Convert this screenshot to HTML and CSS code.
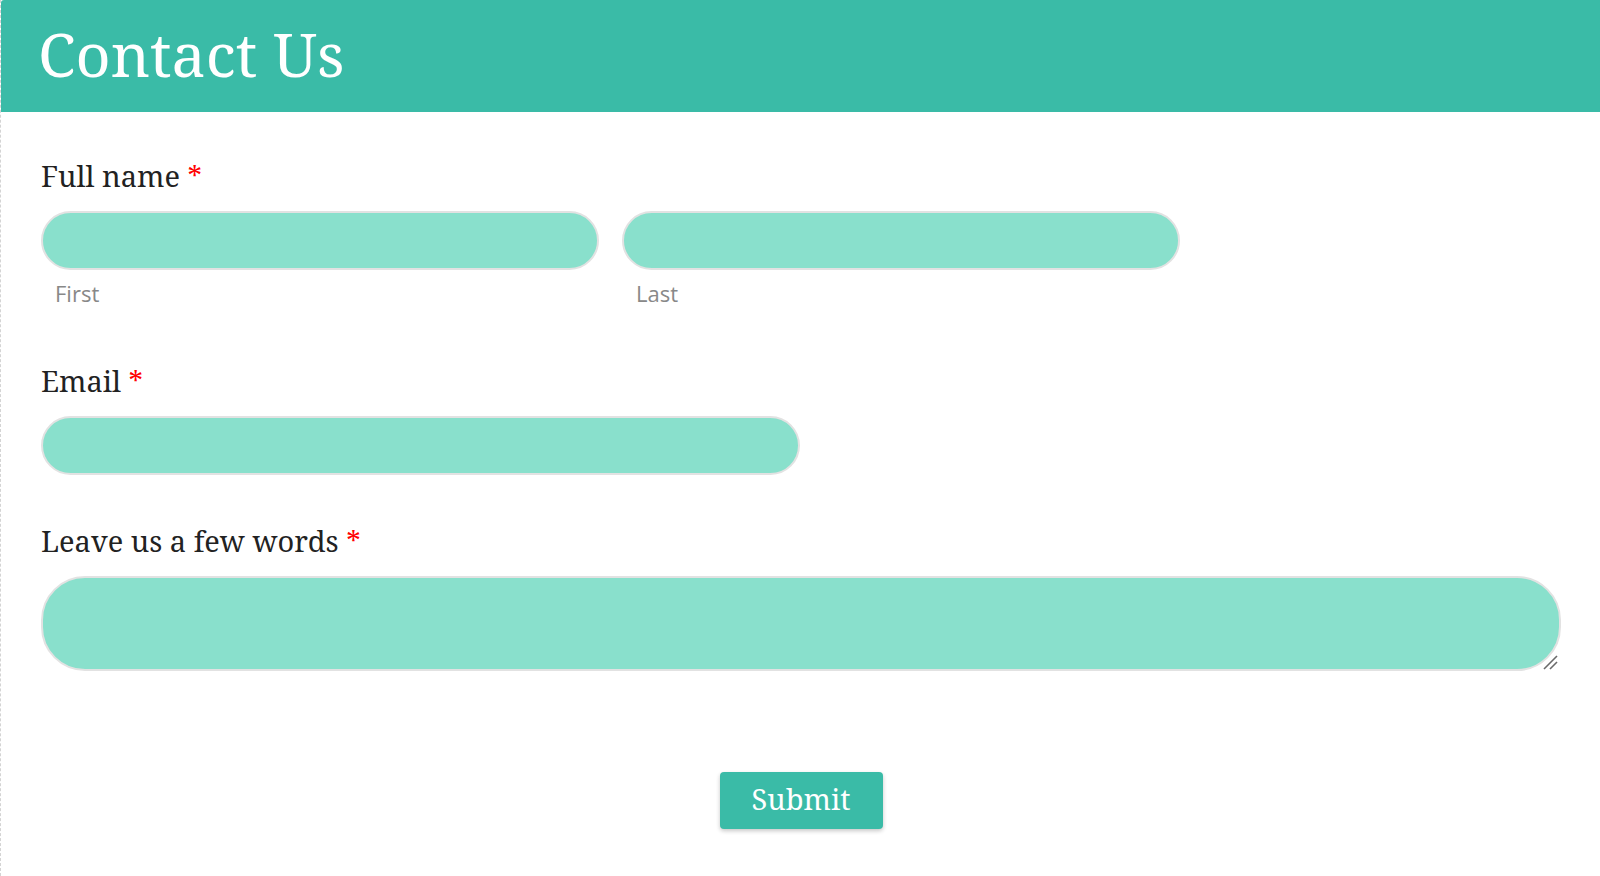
FILE: index.html
```html
<!DOCTYPE html>
<html lang="en">
<head>
<meta charset="utf-8">
<title>Contact Us</title>
<link rel="stylesheet" href="styles.css">
</head>
<body>
<div class="page">
  <header class="header">
    <h1 class="title">Contact Us</h1>
  </header>
  <form class="form">
    <div class="field field-name">
      <label class="label">Full name <span class="req">*</span></label>
      <div class="name-row">
        <div class="name-part">
          <input class="input" type="text">
          <span class="sublabel">First</span>
        </div>
        <div class="name-part">
          <input class="input" type="text">
          <span class="sublabel">Last</span>
        </div>
      </div>
    </div>
    <div class="field field-email">
      <label class="label">Email <span class="req">*</span></label>
      <input class="input input-email" type="email">
    </div>
    <div class="field field-words">
      <label class="label">Leave us a few words <span class="req">*</span></label>
      <div class="textarea-wrap">
        <textarea class="textarea"></textarea>
        <svg class="grip" width="16" height="16" viewBox="0 0 16 16" aria-hidden="true">
          <line x1="2" y1="15" x2="15" y2="2" stroke="#6a6a6a" stroke-width="1.6"/>
          <line x1="8" y1="15" x2="15" y2="8" stroke="#6a6a6a" stroke-width="1.6"/>
        </svg>
      </div>
    </div>
    <div class="actions">
      <button class="submit" type="button">Submit</button>
    </div>
  </form>
</div>
</body>
</html>
```
FILE: styles.css
```css
html, body {
  margin: 0;
  padding: 0;
  background: #ffffff;
}

body {
  font-family: "Noto Serif", "Droid Serif", "DejaVu Serif", serif;
  color: #222222;
}

.page {
  min-height: 876px;
  border-left: 1px dashed #d4d4d4;
  box-sizing: border-box;
}

.header {
  height: 112px;
  background: #3abba7;
  display: flex;
  align-items: center;
  padding-left: 37px;
  box-sizing: border-box;
  border-top-left-radius: 3px;
}

.title {
  margin: 0 0 4px 0;
  font-weight: 400;
  font-size: 61px;
  line-height: 70px;
  color: #ffffff;
}

.form {
  padding: 0 39px 0 40px;
  display: flex;
  flex-direction: column;
}

.field {
  display: flex;
  flex-direction: column;
  align-items: flex-start;
}

.field-name { margin-top: 47px; }
.field-email { margin-top: 57px; }
.field-words { margin-top: 49px; }

.label {
  font-size: 29px;
  line-height: 34px;
  height: 34px;
  margin-bottom: 18px;
  color: #222222;
}

.req {
  color: #ff0000;
}

.name-row {
  display: flex;
  gap: 23px;
}

.name-part {
  display: flex;
  flex-direction: column;
}

.input {
  width: 558px;
  height: 59px;
  box-sizing: border-box;
  border: 2px solid #e2e2e2;
  border-radius: 30px;
  background: #89e0cc;
  outline: none;
  padding: 0 20px;
  font-family: inherit;
  font-size: 20px;
}

.sublabel {
  margin-top: 9px;
  padding-left: 14px;
  font-family: "Open Sans", "Noto Sans", sans-serif;
  font-size: 22px;
  line-height: 28px;
  color: #888888;
}

.input-email {
  width: 759px;
}

.textarea-wrap {
  position: relative;
  width: 100%;
}

.textarea {
  display: block;
  width: 100%;
  height: 95px;
  box-sizing: border-box;
  border: 2px solid #e2e2e2;
  border-radius: 44px;
  background: #89e0cc;
  outline: none;
  resize: none;
  font-family: inherit;
  font-size: 20px;
  padding: 10px 20px;
}

.grip {
  position: absolute;
  right: 3px;
  bottom: 1px;
  pointer-events: none;
}

.actions {
  display: flex;
  justify-content: center;
  margin-top: 101px;
}

.submit {
  width: 163px;
  height: 57px;
  border: none;
  border-radius: 4px;
  background: #3abba7;
  color: #ffffff;
  font-family: inherit;
  font-size: 29px;
  line-height: 1;
  padding: 0 0 4px 0;
  box-shadow: 0 2px 4px rgba(0, 0, 0, 0.22);
  cursor: pointer;
}
```
